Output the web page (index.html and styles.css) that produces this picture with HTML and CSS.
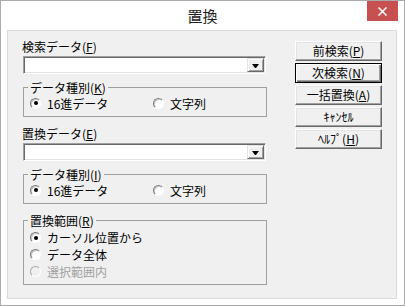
FILE: index.html
```html
<!DOCTYPE html>
<html lang="ja">
<head>
<meta charset="utf-8">
<title>置換</title>
<link rel="stylesheet" href="styles.css">
</head>
<body>
<div class="window">
  <div class="titlebar">
    <div class="title">置換</div>
    <div class="close">
      <svg width="9" height="9" viewBox="0 0 9 9"><path d="M0.5 0.5 L8.5 8.5 M8.5 0.5 L0.5 8.5" stroke="#fff" stroke-width="1.5" fill="none"/></svg>
    </div>
  </div>
  <div class="client">
    <div class="left">
      <div class="label">検索データ(<u>F</u>)</div>
      <div class="combo"><div class="dropbtn"><span class="arrow"></span></div></div>
      <fieldset class="group">
        <legend>データ種別(<u>K</u>)</legend>
        <div class="opts2">
          <div class="opt"><span class="radio on"></span>16進データ</div>
          <div class="opt"><span class="radio"></span>文字列</div>
        </div>
      </fieldset>
      <div class="label label2">置換データ(<u>E</u>)</div>
      <div class="combo"><div class="dropbtn"><span class="arrow"></span></div></div>
      <fieldset class="group">
        <legend>データ種別(<u>I</u>)</legend>
        <div class="opts2">
          <div class="opt"><span class="radio on"></span>16進データ</div>
          <div class="opt"><span class="radio"></span>文字列</div>
        </div>
      </fieldset>
      <fieldset class="group group3">
        <legend>置換範囲(<u>R</u>)</legend>
        <div class="opts3">
          <div class="opt"><span class="radio on"></span>カーソル位置から</div>
          <div class="opt"><span class="radio"></span>データ全体</div>
          <div class="opt disabled"><span class="radio"></span>選択範囲内</div>
        </div>
      </fieldset>
    </div>
    <div class="buttons">
      <div class="btn">前検索(<u>P</u>)</div>
      <div class="btn default">次検索(<u>N</u>)</div>
      <div class="btn">一括置換(<u>A</u>)</div>
      <div class="btn">ｷｬﾝｾﾙ</div>
      <div class="btn">ﾍﾙﾌﾟ(<u>H</u>)</div>
    </div>
  </div>
</div>
</body>
</html>
```
FILE: styles.css
```css
body {
  margin: 0;
}
.window {
  width: 405px;
  height: 306px;
  box-sizing: border-box;
  border: 1px solid #ababab;
  background: #fff;
  display: flex;
  flex-direction: column;
  font-family: "Noto Sans CJK JP", sans-serif;
  font-size: 12px;
  color: #000;
}
.titlebar {
  height: 29px;
  flex: none;
  display: grid;
  grid-template-columns: 1fr auto 1fr;
  align-items: start;
}
.title {
  grid-column: 2;
  font-size: 15px;
  line-height: 29px;
  color: #222;
}
.close {
  grid-column: 3;
  justify-self: end;
  width: 31px;
  height: 20px;
  margin-right: 6px;
  background: #c75050;
  display: flex;
  align-items: center;
  justify-content: center;
}
.close svg {
  display: block;
}
.client {
  flex: none;
  height: 269px;
  box-sizing: border-box;
  margin: 0 7px 0 6px;
  border: 1px solid #dadada;
  background: #f0f0f0;
  display: flex;
  gap: 28px;
  padding: 9px 0 0 15px;
}
.left {
  width: 244px;
  display: flex;
  flex-direction: column;
}
.label {
  line-height: 14px;
  margin-left: -1px;
}
.label2 {
  margin-top: 10px;
}
.combo {
  margin-top: 2px;
  width: 243px;
  height: 18px;
  box-sizing: border-box;
  background: #fff;
  border: 1px solid;
  border-color: #a0a0a0 #fff #fff #a0a0a0;
  box-shadow: inset 1px 1px #696969, inset -1px -1px #e3e3e3;
  display: flex;
  justify-content: flex-end;
  padding: 1px;
}
.dropbtn {
  width: 17px;
  height: 14px;
  box-sizing: border-box;
  background: #f0f0f0;
  border: 1px solid;
  border-color: #e3e3e3 #696969 #696969 #e3e3e3;
  box-shadow: inset 1px 1px #fff, inset -1px -1px #a0a0a0;
  display: flex;
  align-items: center;
  justify-content: center;
}
.arrow {
  width: 1px;
  height: 0;
  border-left: 3px solid transparent;
  border-right: 3px solid transparent;
  border-top: 4px solid #000;
  margin-top: 1px;
}
.group {
  margin: 6px 0 0;
  padding: 0 4px 5px 4px;
  border: 1px solid #a0a0a0;
  min-width: 0;
}
.group3 {
  margin-top: 9px;
  padding-bottom: 4px;
}
.group legend {
  padding: 0 2px;
  line-height: 15px;
}
.opts2 {
  display: grid;
  grid-template-columns: 123px auto;
  padding-left: 2px;
}
.opts3 {
  display: flex;
  flex-direction: column;
  padding: 1px 0 0 2px;
}
.opt {
  display: flex;
  align-items: center;
  height: 16px;
}
.opts3 .opt {
  height: 17px;
}
.radio {
  width: 11px;
  height: 11px;
  box-sizing: border-box;
  border-radius: 50%;
  background: #fff;
  border: 1px solid;
  border-color: #7a7a7a #fff #fff #7a7a7a;
  box-shadow: inset 1px 1px #c8c8c8;
  margin-right: 6px;
  display: flex;
  align-items: center;
  justify-content: center;
  flex: none;
}
.radio.on::after {
  content: "";
  width: 4px;
  height: 4px;
  border-radius: 50%;
  background: #000;
}
.disabled {
  color: #a0a0a0;
}
.disabled .radio {
  background: #f0f0f0;
  border-color: #a8a8a8 #fff #fff #a8a8a8;
  box-shadow: none;
}
.buttons {
  width: 87px;
  display: flex;
  flex-direction: column;
  gap: 2px;
  margin-top: 1px;
}
.btn {
  height: 20px;
  box-sizing: border-box;
  background: #f0f0f0;
  border: 1px solid;
  border-color: #fff #696969 #696969 #fff;
  box-shadow: inset -1px -1px #a0a0a0, inset 1px 1px #e3e3e3;
  text-align: center;
  line-height: 18px;
}
.btn.default {
  border-color: #000;
  box-shadow: inset 1px 1px #fff, inset -1px -1px #696969, inset -2px -2px #a0a0a0;
}
```
